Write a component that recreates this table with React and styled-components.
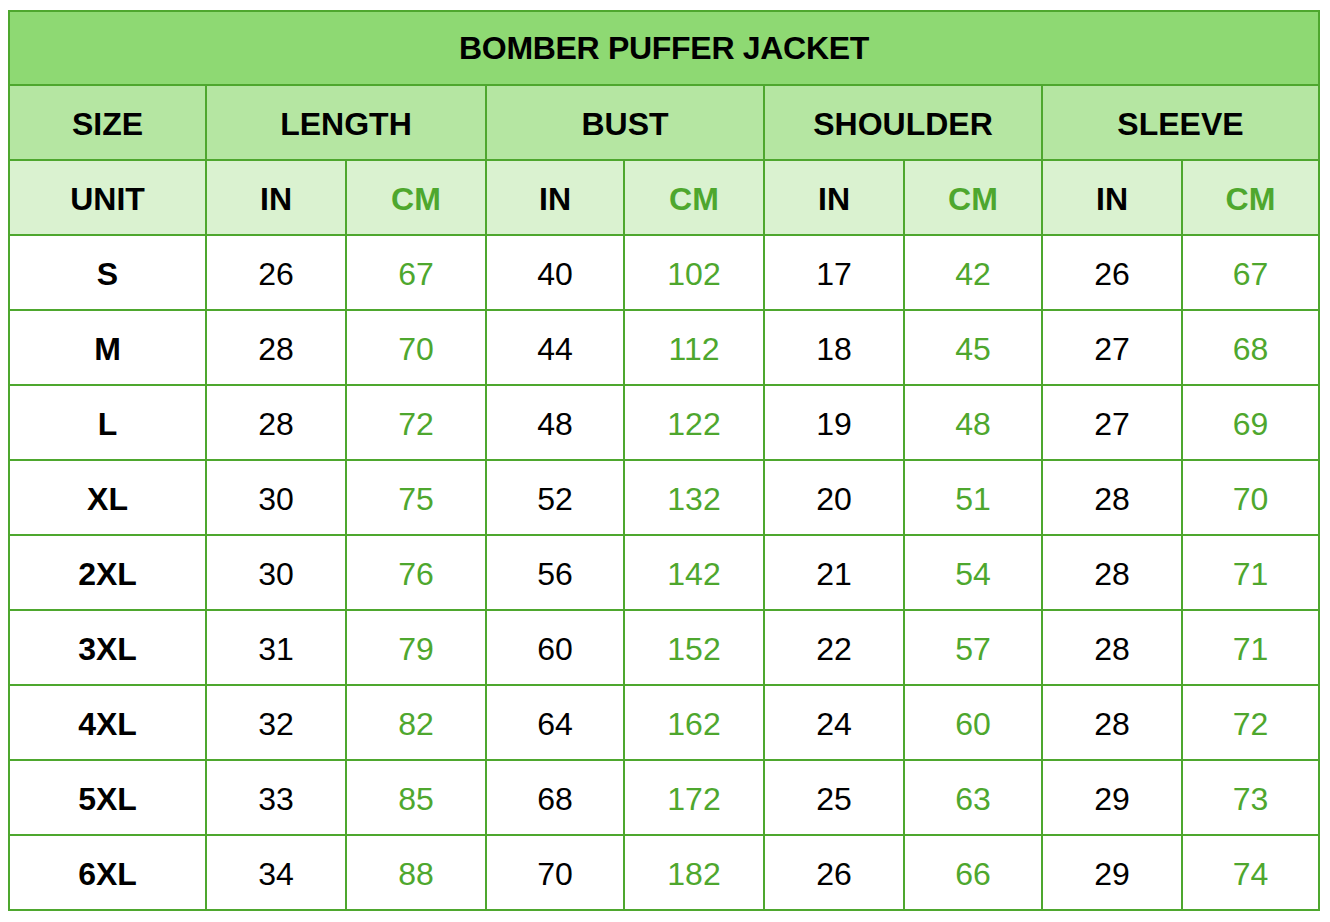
import React from 'react'
import styled, { createGlobalStyle } from 'styled-components'

const Global = createGlobalStyle`
  body {
    margin: 0;
    background: #ffffff;
    font-family: 'Liberation Sans', Arial, sans-serif;
  }
`

const Page = styled.div`
  padding: 10px 0 0 8px;
`

const Table = styled.table`
  border-collapse: collapse;
  table-layout: fixed;
  width: 1310px;
`

const Cell = styled.td`
  border: 2px solid #4ea72e;
  height: 75px;
  padding: 4px 0 0;
  box-sizing: border-box;
  text-align: center;
  vertical-align: middle;
  font-size: 32px;
  font-weight: ${p => (p.$bold ? 700 : 400)};
  color: ${p => (p.$green ? '#4ea72e' : '#000000')};
  background: ${p => p.$bg || '#ffffff'};
`

const TitleCell = styled(Cell)`
  height: 74px;
  background: #8ed973;
  padding: 0;
  font-size: 32px;
  font-weight: 700;
  letter-spacing: -0.3px;
`

const widths = [197, 140, 140, 138, 140, 140, 138, 140, 137]

const groups = ['LENGTH', 'BUST', 'SHOULDER', 'SLEEVE']

const rows = [
  ['S', 26, 67, 40, 102, 17, 42, 26, 67],
  ['M', 28, 70, 44, 112, 18, 45, 27, 68],
  ['L', 28, 72, 48, 122, 19, 48, 27, 69],
  ['XL', 30, 75, 52, 132, 20, 51, 28, 70],
  ['2XL', 30, 76, 56, 142, 21, 54, 28, 71],
  ['3XL', 31, 79, 60, 152, 22, 57, 28, 71],
  ['4XL', 32, 82, 64, 162, 24, 60, 28, 72],
  ['5XL', 33, 85, 68, 172, 25, 63, 29, 73],
  ['6XL', 34, 88, 70, 182, 26, 66, 29, 74],
]

const App = () => (
  <Page>
    <Global />
    <Table>
      <colgroup>
        {widths.map((w, i) => (
          <col key={i} style={{ width: w }} />
        ))}
      </colgroup>
      <tbody>
        <tr>
          <TitleCell colSpan={9}>BOMBER PUFFER JACKET</TitleCell>
        </tr>
        <tr>
          <Cell $bold $bg="#b5e6a2">SIZE</Cell>
          {groups.map(g => (
            <Cell key={g} colSpan={2} $bold $bg="#b5e6a2">
              {g}
            </Cell>
          ))}
        </tr>
        <tr>
          <Cell $bold $bg="#daf2d0">UNIT</Cell>
          {groups.map(g => (
            <React.Fragment key={g}>
              <Cell $bold $bg="#daf2d0">IN</Cell>
              <Cell $bold $green $bg="#daf2d0">CM</Cell>
            </React.Fragment>
          ))}
        </tr>
        {rows.map(r => (
          <tr key={r[0]}>
            <Cell $bold>{r[0]}</Cell>
            {r.slice(1).map((v, i) => (
              <Cell key={i} $green={i % 2 === 1}>
                {v}
              </Cell>
            ))}
          </tr>
        ))}
      </tbody>
    </Table>
  </Page>
)

export default App
